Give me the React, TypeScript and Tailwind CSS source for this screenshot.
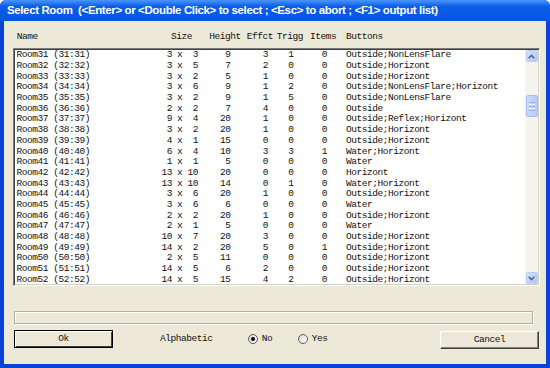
import React from "react";

type Row = [string, number, number, number, number, number, number, string];

const rows: Row[] = [
  ["Room31 (31:31)", 3, 3, 9, 3, 1, 0, "Outside;NonLensFlare"],
  ["Room32 (32:32)", 3, 5, 7, 2, 0, 0, "Outside;Horizont"],
  ["Room33 (33:33)", 3, 2, 5, 1, 0, 0, "Outside;Horizont"],
  ["Room34 (34:34)", 3, 6, 9, 1, 2, 0, "Outside;NonLensFlare;Horizont"],
  ["Room35 (35:35)", 3, 2, 9, 1, 5, 0, "Outside;NonLensFlare"],
  ["Room36 (36:36)", 2, 2, 7, 4, 0, 0, "Outside"],
  ["Room37 (37:37)", 9, 4, 20, 1, 0, 0, "Outside;Reflex;Horizont"],
  ["Room38 (38:38)", 3, 2, 20, 1, 0, 0, "Outside;Horizont"],
  ["Room39 (39:39)", 4, 1, 15, 0, 0, 0, "Outside;Horizont"],
  ["Room40 (40:40)", 6, 4, 10, 3, 3, 1, "Water;Horizont"],
  ["Room41 (41:41)", 1, 1, 5, 0, 0, 0, "Water"],
  ["Room42 (42:42)", 13, 10, 20, 0, 0, 0, "Horizont"],
  ["Room43 (43:43)", 13, 10, 14, 0, 1, 0, "Water;Horizont"],
  ["Room44 (44:44)", 3, 6, 20, 1, 0, 0, "Outside;Horizont"],
  ["Room45 (45:45)", 3, 6, 6, 0, 0, 0, "Water"],
  ["Room46 (46:46)", 2, 2, 20, 1, 0, 0, "Outside;Horizont"],
  ["Room47 (47:47)", 2, 1, 5, 0, 0, 0, "Water"],
  ["Room48 (48:48)", 10, 7, 20, 3, 0, 0, "Outside;Horizont"],
  ["Room49 (49:49)", 14, 2, 20, 5, 0, 1, "Outside;Horizont"],
  ["Room50 (50:50)", 2, 5, 11, 0, 0, 0, "Outside;Horizont"],
  ["Room51 (51:51)", 14, 5, 6, 2, 0, 0, "Outside;Horizont"],
  ["Room52 (52:52)", 14, 5, 15, 4, 2, 0, "Outside;Horizont"],
];

const mono = "font-['Liberation_Mono',monospace] font-normal text-[9.5px] tracking-[-0.46px] text-[#111]";

function ScrollButton({ dir }: { dir: "up" | "down" }) {
  return (
    <div className="h-[12px] w-[12px] ml-[0.5px] rounded-[2px] border border-[#b9cdf6] bg-linear-to-br from-[#d2e0fd] to-[#b1c8f6] flex items-center justify-center">
      <svg width="7" height="5" viewBox="0 0 7 5">
        {dir === "up" ? (
          <path d="M0.8 4.2 L3.5 1.3 L6.2 4.2" fill="none" stroke="#4d6185" strokeWidth="1.6" />
        ) : (
          <path d="M0.8 0.8 L3.5 3.7 L6.2 0.8" fill="none" stroke="#4d6185" strokeWidth="1.6" />
        )}
      </svg>
    </div>
  );
}

function Radio({ checked }: { checked?: boolean }) {
  return (
    <span className="w-[10px] h-[10px] rounded-full bg-linear-to-br from-[#dcdad0] to-white border border-[#5a5a5a] flex items-center justify-center shrink-0">
      {checked ? <span className="w-[4px] h-[4px] rounded-full bg-black" /> : null}
    </span>
  );
}

export default function App() {
  return (
    <div className="w-[550px] h-[368px] bg-[#0842d6] rounded-t-[6px] flex flex-col overflow-hidden text-black">
      <div className="h-[21px] shrink-0 bg-linear-to-b from-[#4a95fb] via-[#0b5ee9] via-30% to-[#0656e3] flex items-center pl-[7px] rounded-t-[6px]">
        <span className="font-['Liberation_Sans',sans-serif] font-bold text-[11.5px] text-white whitespace-pre tracking-[-0.38px]">
          {"Select Room  (<Enter> or <Double Click> to select ; <Esc> to abort ; <F1> output list)"}
        </span>
      </div>
      <div className="flex-1 mx-[4px] mb-[4px] bg-[#ECE9D8] flex flex-col">
        {/* header */}
        <div className={`h-[27px] pt-[5px] flex items-center pl-[12.7px] whitespace-pre ${mono}`}>
          <span className="w-[154.3px] shrink-0">Name</span>
          <span className="w-[38.3px] shrink-0">Size</span>
          <span className="w-[37.4px] shrink-0">Height</span>
          <span className="w-[30px] shrink-0">Effct</span>
          <span className="w-[33.3px] shrink-0">Trigg</span>
          <span className="w-[36px] shrink-0">Items</span>
          <span>Buttons</span>
        </div>
        {/* list */}
        <div className="ml-[9px] w-[527px] h-[238px] flex bg-white border border-t-[#7a7a7a] border-l-[#7a7a7a] border-b-white border-r-white shadow-[inset_1px_1px_0_#404040,inset_-1px_-1px_0_#d4d0c8] p-[1px]">
          <div className={`flex-1 overflow-hidden pt-[0.35px] ${mono}`}>
            {rows.map((r) => (
              <div key={r[0]} className="h-[10.7px] leading-[10.7px] flex whitespace-pre pl-[1.5px]">
                <span className="w-[135px] shrink-0">{r[0]}</span>
                <span className="w-[20.5px] shrink-0 text-right">{r[1]}</span>
                <span className="w-[15px] shrink-0 pl-[5px]">x</span>
                <span className="w-[11px] shrink-0 text-right">{r[2]}</span>
                <span className="w-[32.5px] shrink-0 text-right">{r[3]}</span>
                <span className="w-[37.5px] shrink-0 text-right">{r[4]}</span>
                <span className="w-[25.5px] shrink-0 text-right">{r[5]}</span>
                <span className="w-[33.5px] shrink-0 text-right">{r[6]}</span>
                <span className="pl-[19px]">{r[7]}</span>
              </div>
            ))}
          </div>
          <div className="w-[13px] shrink-0 bg-[#f5f4ef] flex flex-col">
            <ScrollButton dir="up" />
            <div className="mt-[33px] h-[22px] w-[12px] ml-[0.5px] rounded-[2px] border border-[#a6bdf1] bg-linear-to-r from-[#cbdafc] to-[#b6cbf7] flex flex-col items-center justify-center gap-[1px]">
              <span className="w-[6px] h-[1px] bg-[#8fb0f5]" />
              <span className="w-[6px] h-[1px] bg-[#eef3fe]" />
              <span className="w-[6px] h-[1px] bg-[#8fb0f5]" />
              <span className="w-[6px] h-[1px] bg-[#eef3fe]" />
              <span className="w-[6px] h-[1px] bg-[#8fb0f5]" />
            </div>
            <div className="flex-1" />
            <ScrollButton dir="down" />
          </div>
        </div>
        {/* field */}
        <div className="ml-[10px] mt-[25px] w-[519px] h-[13px] border border-[#b3b0a2] shadow-[inset_1px_1px_0_#fff,1px_1px_0_#fff]" />
        {/* buttons row */}
        <div className={`mt-[6px] h-[19px] flex items-start ${mono}`}>
          <div className="ml-[10px] w-[99px] h-[18px] border border-black shadow-[inset_1px_1px_0_#fff,inset_-1px_-1px_0_#404040] flex items-center justify-center">
            Ok
          </div>
          <span className="ml-[47px] h-[18px] flex items-center">Alphabetic</span>
          <span className="ml-[36px] h-[18px] flex items-center">
            <Radio checked />
            <span className="ml-[3.4px]">No</span>
          </span>
          <span className="ml-[26px] h-[18px] flex items-center">
            <Radio />
            <span className="ml-[3.4px]">Yes</span>
          </span>
          <div className="ml-auto mr-[7px] mt-[1px] w-[99px] h-[18px] border border-t-white border-l-white border-b-[#404040] border-r-[#404040] shadow-[inset_-1px_-1px_0_#808080] flex items-center justify-center">
            Cancel
          </div>
        </div>
      </div>
    </div>
  );
}
